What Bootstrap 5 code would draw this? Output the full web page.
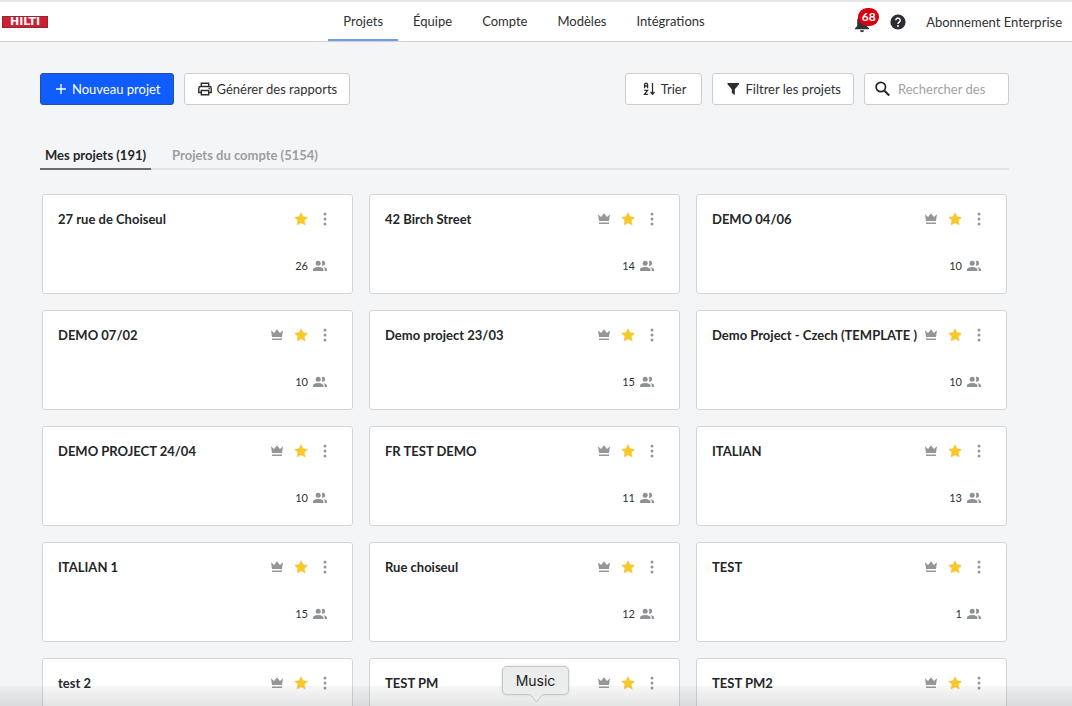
<!DOCTYPE html>
<html lang="fr">
<head>
<meta charset="utf-8">
<meta name="viewport" content="width=device-width, initial-scale=1">
<title>Projets</title>
<link href="https://cdn.jsdelivr.net/npm/bootstrap@5.3.0/dist/css/bootstrap.min.css" rel="stylesheet">
<style>
  body { font: 13px/20px Lato, sans-serif; color: #2f3133; background: #f4f5f7; }
  a { color: inherit; text-decoration: none; }
  svg { display: block; flex: none; }

  .topbar { display: grid; grid-template-columns: 1fr auto 1fr; height: 42px; padding: 0 10px 0 2px; background: #fff; border-top: 2px solid #e6e6e6; border-bottom: 1px solid #cfd1d3; }
  .brand-box { width: 46px; height: 12px; background: #cf2030; border: 1px solid #8d2a33; color: #fff; font: bold 11px/10px "DejaVu Sans", sans-serif; text-align: center; }
  .main-menu a { padding: 9px 15px 0; border-bottom: 2px solid transparent; }
  .main-menu a.active { border-color: #6f9be8; }
  .alert-bell { width: 26px; height: 26px; margin-right: 10px; }
  .alert-count { top: -1px; left: 4px; min-width: 21px; height: 18px; padding: 0 3px; border-radius: 9px; background: #d8000f; color: #fff; font-size: 12px; line-height: 18px; font-weight: 700; text-align: center; }

  main { padding: 31px 63px 0 40px; }
  .tool-group { gap: 10px; }
  .tool { height: 32px; padding: 0 12px; font-size: 13px; line-height: 20px; border: 1px solid #cbced1; border-radius: 3px; background: #fff; color: #2f3133; }
  .tool-main { gap: 5px; padding: 0 12px 0 14px; background: #0f5cff; border-color: #2b4f9f; color: #fff; }
  .tool-sort { padding: 0 15px 0 16px; }
  .search { width: 145px; padding: 0 10px; }
  .search input { width: 100%; min-width: 0; border: 0; padding: 0; background: none; outline: 0; }
  .search input::placeholder { color: #a0a3a6; opacity: 1; }

  .scope-tabs { margin-top: 40px; border-bottom: 2px solid #e1e3e5; font-weight: 700; color: #9b9ea1; }
  .scope-tabs a { padding: 0 5px 3px; margin-bottom: -2px; border-bottom: 2px solid transparent; }
  .scope-tabs a.active { color: #242628; border-color: #6a6d70; }

  .projects { display: grid; grid-template-columns: repeat(3, minmax(0, 1fr)); gap: 16px; padding: 24px 2px; }
  .project { height: 100px; padding: 14px 19px 17px 15px; background: #fff; border: 1px solid #d3d6d8; border-radius: 3px; }
  .project h2 { margin: 0; font-size: 13px; line-height: 20px; font-weight: 700; color: #242628; white-space: nowrap; }
  .icon-btn { padding: 0; border: 0; background: none; color: inherit; }
  .project-icons { gap: 8px; color: #94979a; }
  .members { font-size: 11px; line-height: 20px; gap: 4px; padding-right: 5px; }
  .members svg { color: #8f9295; }

  .dock-shade { height: 20px; background: linear-gradient(rgba(90,95,95,.05), rgba(90,95,95,.17)); pointer-events: none; }
  .dock-tip { left: 50%; bottom: 11px; width: 67px; height: 29px; margin-left: -34px; border: 1px solid #c5c8c8; border-radius: 5px; background: #ebeded; box-shadow: 0 0 3px rgba(0,0,0,.15); color: #222; font: 14px/27px Inter, sans-serif; text-align: center; }
  .dock-tip svg { top: 27px; left: 24px; }
</style>
</head>
<body class="vh-100 overflow-hidden">

<svg width="0" height="0" class="position-absolute" aria-hidden="true">
  <symbol id="crown" viewBox="0 0 16 16"><path fill="currentColor" d="M2 3.200 5.100 6 8 2.200 10.900 6 14 3.200 13 10H3zM3 11.500h10V13H3z"/></symbol>
  <symbol id="star" viewBox="0 0 16 16"><path fill="#fff4a3" d="m9 2.500 2 4.300 4.200.4-3.200 3 1 4.600-4-2.300-4 2.300z"/><path fill="#fbc91f" stroke="#e2bd63" stroke-width=".6" d="m8 1.700 1.900 4.100 4.400.5-3.300 3 .9 4.400L8 11.500l-3.900 2.200.9-4.400-3.300-3 4.400-.5z"/></symbol>
  <symbol id="dots" viewBox="0 0 16 16"><g fill="currentColor"><circle cx="8" cy="3" r="1.500"/><circle cx="8" cy="8" r="1.500"/><circle cx="8" cy="13" r="1.500"/></g></symbol>
  <symbol id="people" viewBox="0 0 16 16"><g fill="currentColor"><circle cx="6.200" cy="5.200" r="2.500"/><path d="M1 13v-1.400C1 9.700 4 8.900 6.200 8.900s5.200.8 5.200 2.700V13z"/><path d="M9.700 2.900a2.500 2.500 0 1 1 0 4.600c.8-1.400.8-3.200 0-4.600zM11.300 9c2 .4 3.700 1.200 3.700 2.700V13h-2.300v-1.400c0-1-.500-1.900-1.400-2.600z"/></g></symbol>
</svg>

<header class="topbar">
  <div class="d-flex align-items-center"><a href="#" class="brand-box" aria-label="HILTI">HILTI</a></div>
  <nav class="main-menu d-flex me-3">
    <a href="#" class="active" aria-current="page">Projets</a>
    <a href="#">Équipe</a>
    <a href="#">Compte</a>
    <a href="#">Modèles</a>
    <a href="#">Intégrations</a>
  </nav>
  <div class="d-flex align-items-center justify-content-end">
    <button class="icon-btn alert-bell position-relative" aria-label="Notifications">
      <svg width="18" height="24" viewBox="0 0 18 24"><path fill="#303236" d="M8 6c-3 0-4.800 2.300-4.800 5v5L1 18.300v1h14v-1L12.800 16v-5C12.800 8.300 11 6 8 6zM6 20.300h4a2 2 0 0 1-4 0z"/></svg>
      <span class="alert-count position-absolute">68</span>
    </button>
    <button class="icon-btn" aria-label="Aide">
      <svg width="16" height="16" viewBox="0 0 16 16"><circle cx="8" cy="8" r="7.600" fill="#2b2d33"/><path d="M5.800 6.300a2.200 2.200 0 1 1 3.500 1.800C8.500 8.700 8 9 8 10" fill="none" stroke="#fff" stroke-width="1.500"/><circle cx="8" cy="12" r="1" fill="#fff"/></svg>
    </button>
    <a href="#" class="ms-3 ps-1">Abonnement Enterprise</a>
  </div>
</header>

<main>
  <div class="d-flex justify-content-between">
    <div class="tool-group d-flex">
      <button class="tool tool-main d-flex align-items-center"><svg width="12" height="12" viewBox="0 0 12 12"><path d="M6 1v10M1 6h10" stroke="#fff" stroke-width="1.300"/></svg>Nouveau projet</button>
      <button class="tool d-flex align-items-center gap-1"><svg width="16" height="16" viewBox="0 0 16 16" fill="none" stroke="#2b2d30" stroke-width="1.400"><path d="M4.300 5.500V2.200h7.400v3.300M4.300 11.500H1.800V7.200c0-1 .6-1.700 1.600-1.700h9.200c1 0 1.600.7 1.600 1.700v4.300h-2.500M4.300 9.500h7.400v4.300H4.300z"/><path d="M11.500 7.500h1.300"/></svg>Générer des rapports</button>
    </div>
    <div class="tool-group d-flex">
      <button class="tool tool-sort d-flex align-items-center gap-1"><svg width="15" height="16" viewBox="0 0 15 16" fill="none" stroke="#2b2d30" stroke-width="1.300"><path d="M2.600 7.200V3.500q0-1.300 1.500-1.300t1.500 1.300v3.700M2.600 5h3M2.300 9.300h3.300l-3.100 4.100h3.400M10.500 2v11M8.500 11l2 2.200 2-2.200"/></svg>Trier</button>
      <button class="tool d-flex align-items-center gap-1"><svg width="16" height="16" viewBox="0 0 16 16"><path fill="#2b2d30" d="M2.500 2h11.500v1.200L9.800 8.200V14l-3-2V8.200L2.500 3.200z"/></svg>Filtrer les projets</button>
      <label class="tool search d-flex align-items-center gap-2"><svg width="15" height="16" viewBox="0 0 15 16" fill="none" stroke="#222428"><circle cx="5.800" cy="6" r="4.700" stroke-width="1.700"/><path d="m9.200 9.500 5 5" stroke-width="2"/></svg><input type="text" aria-label="Rechercher" placeholder="Rechercher des"></label>
    </div>
  </div>

  <nav class="scope-tabs d-flex gap-3">
    <a href="#" class="active" aria-current="page">Mes projets (191)</a>
    <a href="#">Projets du compte (5154)</a>
  </nav>

  <section class="projects" id="projects"></section>
</main>

<div class="dock-shade position-absolute bottom-0 start-0 end-0"></div>
<div class="dock-tip position-absolute" role="tooltip">Music<svg class="position-absolute" width="19" height="10" viewBox="0 0 19 10"><path d="M0 0h19c-2.500 0-3.500.6-4.500 1.700L9.500 8 4.500 1.700C3.500.6 2.500 0 0 0z" fill="#ebeded"/><path d="M1 .5c1.800 0 2.700.3 3.500 1.200L9.500 8l5-6.300c.8-.9 1.700-1.200 3.500-1.200" fill="none" stroke="#c5c8c8"/></svg></div>

<template id="project-card">
  <article class="project d-flex flex-column justify-content-between">
    <div class="d-flex justify-content-between">
      <h2></h2>
      <div class="project-icons d-flex align-items-center">
        <svg class="owner" width="16" height="16"><use href="#crown"/></svg>
        <button class="icon-btn" aria-label="Favori"><svg width="16" height="16"><use href="#star"/></svg></button>
        <button class="icon-btn" aria-label="Options"><svg width="16" height="16"><use href="#dots"/></svg></button>
      </div>
    </div>
    <div class="members d-flex justify-content-end align-items-center"><span></span><svg width="16" height="16"><use href="#people"/></svg></div>
  </article>
</template>

<script src="https://cdn.jsdelivr.net/npm/bootstrap@5.3.0/dist/js/bootstrap.bundle.min.js"></script>
<script>
  // name, members, owned by the current user
  const projects = [
    ['27 rue de Choiseul', 26, false], ['42 Birch Street', 14, true], ['DEMO 04/06', 10, true],
    ['DEMO 07/02', 10, true], ['Demo project 23/03', 15, true], ['Demo Project - Czech (TEMPLATE )', 10, true],
    ['DEMO PROJECT 24/04', 10, true], ['FR TEST DEMO', 11, true], ['ITALIAN', 13, true],
    ['ITALIAN 1', 15, true], ['Rue choiseul', 12, true], ['TEST', 1, true],
    ['test 2', '', true], ['TEST PM', '', true], ['TEST PM2', '', true]
  ];
  const list = document.getElementById('projects');
  const card = document.getElementById('project-card');
  for (const [name, members, owned] of projects) {
    const node = card.content.cloneNode(true);
    node.querySelector('h2').textContent = name;
    node.querySelector('.members span').textContent = members;
    if (!owned) node.querySelector('.owner').remove();
    list.append(node);
  }
</script>
</body>
</html>
